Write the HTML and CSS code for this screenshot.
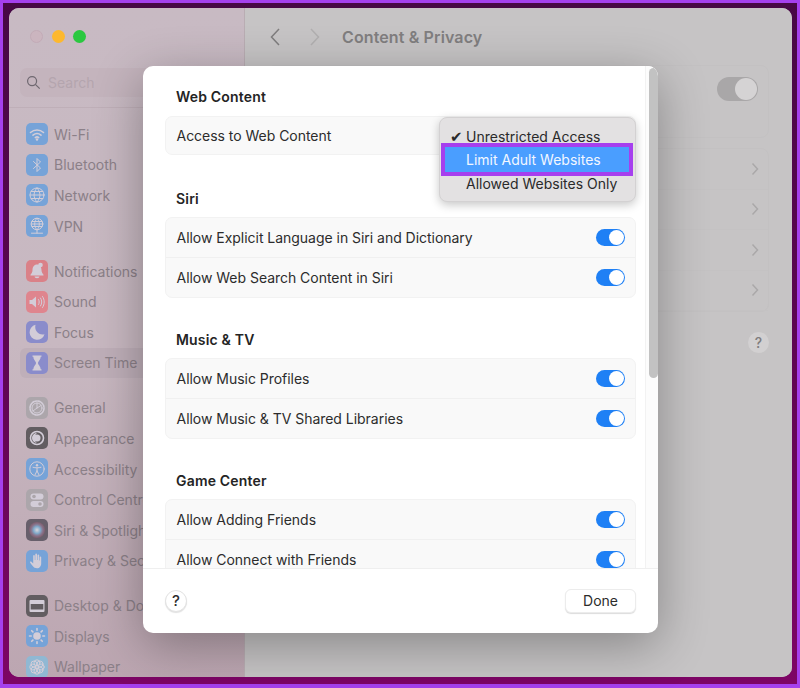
FILE: index.html
```html
<!DOCTYPE html>
<html lang="en">
<head>
<meta charset="utf-8">
<title>Content &amp; Privacy</title>
<link rel="stylesheet" href="styles.css">
</head>
<body>
<div class="desktop">
  <div class="window">
    <aside class="sidebar">
      <div class="traffic">
        <span class="light light-red"></span>
        <span class="light light-yellow"></span>
        <span class="light light-green"></span>
      </div>
      <div class="search">
        <svg class="search-icon" viewBox="0 0 16 16"><circle cx="6.5" cy="6.5" r="4.8"/><path d="M10 10l4.6 4.6"/></svg>
        <span>Search</span>
      </div>
      <div class="side-divider"></div>
      <nav class="nav">
        <div class="group">
          <div class="item"><svg class="ico blue" viewBox="0 0 22 22"><path class="ln" d="M4.5 9.5c3.8-3.4 9.2-3.4 13 0M7 12.2c2.5-2.1 5.5-2.1 8 0M9.300 14.600c1.100-.9 2.300-.9 3.400 0"/><circle class="fl" cx="11" cy="16.500" r="1.200"/></svg><span>Wi-Fi</span></div>
          <div class="item"><svg class="ico blue" viewBox="0 0 22 22"><path class="ln thin" d="M7.500 7.500l7 6.500-3.500 3.500V4.500l3.500 3.500-7 6.500"/></svg><span>Bluetooth</span></div>
          <div class="item"><svg class="ico blue" viewBox="0 0 22 22"><circle class="ln thin" cx="11" cy="11" r="7"/><path class="ln thin" d="M4 11h14M5.200 7.500h11.600M5.200 14.500h11.600M11 4c-4 4-4 10 0 14M11 4c4 4 4 10 0 14"/></svg><span>Network</span></div>
          <div class="item"><svg class="ico blue" viewBox="0 0 22 22"><circle class="ln thin" cx="11" cy="9" r="5.800"/><path class="ln thin" d="M5.200 9h11.600M6 6.500h10M6 11.500h10M11 3.200c-3.200 3-3.200 8.600 0 11.600M11 3.200c3.200 3 3.200 8.600 0 11.600M11 15v3M5.500 18.200h11"/></svg><span>VPN</span></div>
        </div>
        <div class="group">
          <div class="item"><svg class="ico red" viewBox="0 0 22 22"><path class="fl" d="M11 4.500c-3 0-4.500 2.500-4.500 5.500 0 2.500-1 3.500-2 4.800v.7h13v-.7c-1-1.300-2-2.300-2-4.800 0-3-1.500-5.500-4.500-5.500z"/><circle class="fl" cx="14.500" cy="5" r="2.300"/><path class="fl" d="M8.500 16.500h5a2.500 1.800 0 0 1-5 0z"/></svg><span>Notifications</span></div>
          <div class="item"><svg class="ico red2" viewBox="0 0 22 22"><path class="fl" d="M3.500 9v4h2.500l4 3.500v-11L6 9z"/><path class="ln thin" d="M12.500 8.500c1 1.500 1 3.500 0 5M14.500 7c1.700 2.300 1.700 5.700 0 8M16.500 5.500c2.300 3.200 2.300 7.800 0 11"/></svg><span>Sound</span></div>
          <div class="item"><svg class="ico indigo" viewBox="0 0 22 22"><path class="fl" d="M9.500 3.800a7.600 7.600 0 1 0 9 9.500c-5.500 1.500-10.500-3.500-9-9.500z"/></svg><span>Focus</span></div>
          <div class="item active"><svg class="ico indigo" viewBox="0 0 22 22"><path class="fl" d="M6.500 3.500h9v1.200h-.8c0 2.800-2.500 4.400-2.800 6.300.3 1.900 2.800 3.500 2.800 6.300h.8v1.200h-9v-1.200h.8c0-2.800 2.500-4.400 2.800-6.300-.3-1.900-2.800-3.500-2.800-6.300h-.8z"/></svg><span>Screen Time</span></div>
        </div>
        <div class="group">
          <div class="item"><svg class="ico grey" viewBox="0 0 22 22"><circle class="ln" cx="11" cy="11" r="7" stroke-dasharray="2 1.100"/><circle class="ln thin" cx="11" cy="11" r="5"/><path class="ln thin" d="M11 11l4-2.500M11 11V6M11 11l-4 3"/></svg><span>General</span></div>
          <div class="item"><svg class="ico dark" viewBox="0 0 22 22"><circle class="ln" cx="11" cy="11" r="6.500"/><path class="fl" d="M11 6a5 5 0 0 0 0 10c-1.800-1-2.500-3-2.500-5S9.500 7 11 6z"/><circle class="fl" cx="11" cy="11" r="3.500"/></svg><span>Appearance</span></div>
          <div class="item"><svg class="ico blue" viewBox="0 0 22 22"><circle class="ln thin" cx="11" cy="11" r="7.200"/><circle class="fl" cx="11" cy="7.200" r="1.200"/><path class="ln thin" d="M7 9.300c2.700.7 5.300.7 8 0M11 10v3M11 13l-2 3.800M11 13l2 3.800"/></svg><span>Accessibility</span></div>
          <div class="item"><svg class="ico grey" viewBox="0 0 22 22"><rect class="fl" x="4.500" y="4.500" width="13" height="6" rx="3"/><rect class="fl" x="4.500" y="12" width="13" height="6" rx="3"/><circle class="hole" cx="8" cy="7.500" r="1.800"/><circle class="hole" cx="14" cy="15" r="1.800"/></svg><span>Control Centre</span></div>
          <div class="item"><svg class="ico siri" viewBox="0 0 22 22"><defs><radialGradient id="siriGlow"><stop offset="0" stop-color="#d9d5dd"/><stop offset=".45" stop-color="#7fa8c9"/><stop offset="1" stop-color="#b0607c" stop-opacity=".3"/></radialGradient></defs><circle cx="11" cy="11" r="8" fill="url(#siriGlow)"/></svg><span>Siri &amp; Spotlight</span></div>
          <div class="item"><svg class="ico blue" viewBox="0 0 22 22"><path class="fl" d="M8.500 17.800c-1.200-1-3.800-4-4.400-5.300-.4-.9.600-1.500 1.300-.8l1.800 1.800V6c0-1.200 1.600-1.200 1.600 0v4h.5V4.500c0-1.200 1.700-1.200 1.700 0V10h.5V5.300c0-1.200 1.700-1.200 1.700 0V10.500h.5V7.200c0-1.100 1.500-1.100 1.500 0v6.300c0 2.500-1.500 4.800-4.200 4.800z"/></svg><span>Privacy &amp; Security</span></div>
        </div>
        <div class="group">
          <div class="item"><svg class="ico dark" viewBox="0 0 22 22"><rect class="fl" x="3.500" y="5" width="15" height="12" rx="1"/><rect class="hole" x="4.700" y="9" width="12.600" height="5.500"/></svg><span>Desktop &amp; Dock</span></div>
          <div class="item"><svg class="ico blue" viewBox="0 0 22 22"><circle class="fl" cx="11" cy="11" r="3.800"/><path class="ln" d="M11 3.500v1.700M11 16.800v1.700M3.500 11h1.700M16.800 11h1.700M5.700 5.700l1.200 1.200M15.100 15.100l1.200 1.200M5.700 16.300l1.200-1.200M15.100 6.900l1.200-1.200"/></svg><span>Displays</span></div>
          <div class="item"><svg class="ico teal" viewBox="0 0 22 22"><g class="ln thin"><circle cx="11" cy="6.800" r="3"/><circle cx="11" cy="15.200" r="3"/><circle cx="6.800" cy="11" r="3"/><circle cx="15.200" cy="11" r="3"/><circle cx="8" cy="8" r="3"/><circle cx="14" cy="8" r="3"/><circle cx="8" cy="14" r="3"/><circle cx="14" cy="14" r="3"/></g></svg><span>Wallpaper</span></div>
        </div>
      </nav>
    </aside>

    <main class="pane">
      <header class="pane-head">
        <svg class="nav-arrow" viewBox="0 0 12 20"><path d="M10 2L2.500 10l7.500 8"/></svg>
        <svg class="nav-arrow off" viewBox="0 0 12 20"><path d="M2 2l7.500 8L2 18"/></svg>
        <h1>Content &amp; Privacy</h1>
      </header>
      <section class="bg-card bg-card-top">
        <span class="bg-toggle"><span class="bg-knob"></span></span>
      </section>
      <section class="bg-card">
        <div class="bg-row"><svg class="bg-chev" viewBox="0 0 8 14"><path d="M1.500 1.500L6.500 7l-5 5.500"/></svg></div>
        <div class="bg-row"><svg class="bg-chev" viewBox="0 0 8 14"><path d="M1.500 1.500L6.500 7l-5 5.500"/></svg></div>
        <div class="bg-row"><svg class="bg-chev" viewBox="0 0 8 14"><path d="M1.500 1.500L6.500 7l-5 5.500"/></svg></div>
        <div class="bg-row"><svg class="bg-chev" viewBox="0 0 8 14"><path d="M1.500 1.500L6.500 7l-5 5.500"/></svg></div>
      </section>
      <div class="bg-help-wrap"><span class="bg-help">?</span></div>
    </main>
  </div>

  <div class="modal">
    <div class="modal-body">
      <div class="scroll">
        <h2>Web Content</h2>
        <div class="card card-single"><div class="row"><span>Access to Web Content</span></div></div>
        <h2>Siri</h2>
        <div class="card">
          <div class="row"><span>Allow Explicit Language in Siri and Dictionary</span><span class="toggle"></span></div>
          <div class="row"><span>Allow Web Search Content in Siri</span><span class="toggle"></span></div>
        </div>
        <h2>Music &amp; TV</h2>
        <div class="card">
          <div class="row"><span>Allow Music Profiles</span><span class="toggle"></span></div>
          <div class="row"><span>Allow Music &amp; TV Shared Libraries</span><span class="toggle"></span></div>
        </div>
        <h2>Game Center</h2>
        <div class="card">
          <div class="row"><span>Allow Adding Friends</span><span class="toggle"></span></div>
          <div class="row"><span>Allow Connect with Friends</span><span class="toggle"></span></div>
        </div>
      </div>
      <div class="scrollbar"><div class="thumb"></div></div>
    </div>
    <footer class="modal-foot">
      <button class="help">?</button>
      <button class="done">Done</button>
    </footer>
    <div class="menu">
      <div class="menu-item"><span class="check">✔</span>Unrestricted Access</div>
      <div class="menu-item selected">Limit Adult Websites</div>
      <div class="menu-item">Allowed Websites Only</div>
    </div>
  </div>
</div>
</body>
</html>
```
FILE: styles.css
```css
* { box-sizing: border-box; }
html, body { margin: 0; padding: 0; }
body { width: 800px; height: 688px; overflow: hidden; font-family: Inter, "Liberation Sans", sans-serif; }

.desktop {
  position: relative;
  width: 800px;
  height: 688px;
  padding: 5px 5px 7px 6px;
  border: 3px solid #a540ee;
  border-bottom-width: 4px;
  background: linear-gradient(180deg, #470845 0%, #5a0550 45%, #7d0565 100%);
}

.window {
  display: flex;
  width: 100%;
  height: 100%;
  border-radius: 10px;
  overflow: hidden;
  background: #c6c4c5;
}

/* sidebar */
.sidebar {
  width: 236px;
  flex: none;
  background: linear-gradient(180deg, #c8bac3 0%, #c8b8c1 50%, #bca6b1 100%);
  border-right: 1px solid #b9adb3;
}
.traffic { display: flex; gap: 8.500px; padding: 22px 0 0 21px; height: 60px; }
.light { width: 13px; height: 13px; border-radius: 50%; }
.light-red { background: #cbb5bf; border: 1px solid #c3abb7; }
.light-yellow { background: #fdb82e; }
.light-green { background: #2bc840; }

.search {
  display: flex;
  align-items: center;
  gap: 7px;
  height: 29px;
  margin: 0 0 0 11px;
  padding-left: 6px;
  border-radius: 7px;
  background: #c4b4bd;
  font-size: 14px;
  color: #b4a5ae;
}
.search-icon { width: 15px; height: 15px; fill: none; stroke: #6f6870; stroke-width: 1.300; }
.side-divider { height: 1px; margin-top: 10px; background: #bfafb8; }

.nav { padding-top: 11px; }
.group { margin-bottom: 14.400px; }
.item {
  display: flex;
  align-items: center;
  gap: 6px;
  height: 30.600px;
  margin-left: 11px;
  padding-left: 6px;
  font-size: 14px;
  color: #8b8088;
  white-space: nowrap;
  border-radius: 6px;
}
.item.active { background: #bfafb9; }
.ico { width: 22px; height: 22px; flex: none; border-radius: 5px; }
.blue { background: #76a3d8; }
.red { background: #da8188; }
.red2 { background: #df858e; }
.indigo { background: #8a8ccb; }
.grey { background: #aca6ab; }
.dark { background: #625d61; }
.teal { background: #90b8d3; }
.siri { background: #675f6b; }
.ln { fill: none; stroke: #d3cdd8; stroke-width: 1.600; stroke-linecap: round; stroke-linejoin: round; }
.thin { stroke-width: 1; }
.fl { fill: #d3cdd8; }
.hole { fill: #aca6ab; }
.dark .hole { fill: #625d61; }

/* background pane */
.pane { flex: 1; min-width: 0; background: #c6c4c5; }
.pane-head { display: flex; align-items: center; height: 57px; padding-left: 24px; }
.nav-arrow { width: 12px; height: 20px; fill: none; stroke: #7f7d7e; stroke-width: 1.500; margin-right: 28px; }
.nav-arrow.off { stroke: #b1afb0; margin-right: 21px; }
.pane-head h1 { margin: 0; font-size: 16px; font-weight: 600; letter-spacing: .12px; color: #807e7f; }
.bg-card { margin: 0 23px 10px 22px; border: 1px solid #c3c1c2; border-radius: 8px; }
.bg-card-top { display: flex; justify-content: flex-end; height: 73px; padding: 11px 10px 0 0; }
.bg-toggle { position: relative; width: 41px; height: 24px; border-radius: 12px; background: #a9a7a8; }
.bg-knob { position: absolute; right: 1px; top: 1px; width: 22px; height: 22px; border-radius: 50%; background: #d5d3d4; }
.bg-row { display: flex; justify-content: flex-end; align-items: center; height: 40.500px; padding-right: 9px; border-bottom: 1px solid #c4c2c3; }
.bg-chev { width: 8px; height: 14px; fill: none; stroke: #aaa8a9; stroke-width: 1.500; }
.bg-help-wrap { display: flex; justify-content: flex-end; margin: 20px 23px 0 0; }
.bg-help { width: 21px; height: 21px; border-radius: 50%; background: #d2d0d1; color: #7e7c7d; font-size: 14px; font-weight: 500; text-align: center; line-height: 21px; }

/* modal */
.modal {
  position: absolute;
  left: 140px;
  top: 63px;
  width: 515px;
  height: 567px;
  display: flex;
  flex-direction: column;
  background: #fff;
  border-radius: 10px;
  box-shadow: 0 12px 50px rgba(0, 0, 0, .32);
}
.modal-body { display: flex; height: 503px; border-bottom: 1px solid #efefef; overflow: hidden; border-radius: 10px 10px 0 0; }
.scroll { flex: 1; min-width: 0; padding: 0 9px 0 22px; }
.scroll h2 { margin: 0; padding: 32.500px 0 0 11px; height: 60px; font-size: 14px; line-height: 17px; font-weight: 600; letter-spacing: .18px; color: #242424; }
.scroll h2:first-child { padding-top: 22px; height: 50px; }
.card { background: #f9f9f9; border: 1px solid #f2f2f2; border-radius: 7px; }
.row {
  display: flex;
  justify-content: space-between;
  align-items: center;
  height: 39px;
  padding: 0 10px 0 10.500px;
  font-size: 14px;
  letter-spacing: -.03px;
  color: #2c2c2c;
}
.card-single { margin-bottom: 2px; }
.card-single .row { height: 37px; }
.row + .row { border-top: 1px solid #f0f0f0; height: 40px; }
.toggle { position: relative; width: 29px; height: 17px; border-radius: 9px; background: #1f80f5; }
.toggle::after { content: ""; position: absolute; right: 1px; top: 1px; width: 15px; height: 15px; border-radius: 50%; background: #fff; }
.scrollbar { width: 13px; flex: none; padding: 2px 3px 0 3px; border-left: 1px solid #f2f2f2; background: #fcfcfc; }
.thumb { width: 9px; height: 310px; border-radius: 5px; background: #c2c2c2; }

.modal-foot { flex: 1; display: flex; justify-content: space-between; align-items: center; padding: 0 22px; }
.help { width: 22px; height: 22px; padding: 0; border: 1px solid #e3e3e3; border-radius: 50%; background: #fff; font: 500 15px/20px Inter, sans-serif; color: #2c2c2c; box-shadow: 0 1px 1px rgba(0,0,0,.12); }
.done { width: 71px; height: 24px; padding: 0; border: 1px solid #ececec; border-radius: 6px; background: #fff; font: 400 14px/22px Inter, sans-serif; color: #2c2c2c; box-shadow: 0 1px 1px rgba(0,0,0,.14); }

.menu {
  position: absolute;
  left: 296px;
  top: 51px;
  width: 197px;
  height: 85px;
  padding-top: 7px;
  background: #e3e1e2;
  border: 1px solid #d3d1d2;
  border-radius: 8px;
  box-shadow: 0 3px 10px rgba(0, 0, 0, .22);
}
.menu-item { position: relative; height: 24px; line-height: 24px; padding-left: 26px; font-size: 14px; color: #2a2a2a; white-space: nowrap; }
.check { position: absolute; left: 10px; top: 0; font-family: "DejaVu Sans", sans-serif; font-size: 15px; font-weight: 700; }
.selected {
  height: 33px;
  margin: -6px 2px -4px 1px;
  padding-left: 21px;
  line-height: 26px;
  background: #4a9eff;
  border: 4px solid #a63fee;
  color: #f2f7ff;
}
```
